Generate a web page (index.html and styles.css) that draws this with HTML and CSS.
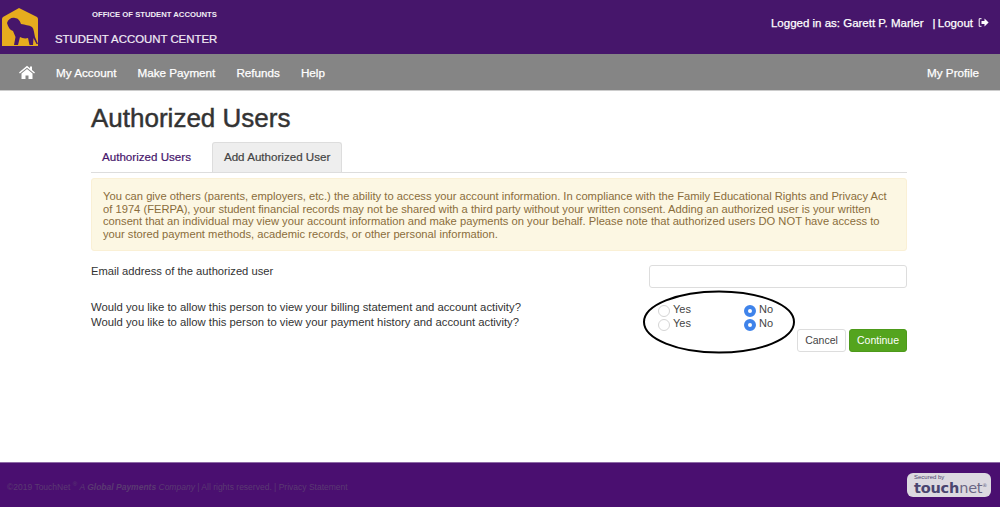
FILE: index.html
```html
<!DOCTYPE html>
<html lang="en">
<head>
<meta charset="utf-8">
<title>Authorized Users</title>
<link rel="stylesheet" href="styles.css">
</head>
<body>
<div class="page">
  <header class="top">
    <div class="brand">
      <svg class="logo" width="40" height="48" viewBox="0 0 40 48">
        <path fill="#e6ac1e" d="M2 46V19Q2 18 3 17L19 8 37 17Q38 18 38 19V46z"/>
        <path fill="#46166b" d="M7 23C8 19 12 17 15 18 18 18 20 21 21 24 25 25 29 25 32 27 34 29 34 33 35 37L38 44 36.500 44 33.500 38 33 45 29.500 45 28 38C25 39 22 38 20 37L18 45 14 45 15.500 37 13 31C10 30 8 27 7 23z"/>
      </svg>
      <div class="brand-text">
        <div class="office">OFFICE OF STUDENT ACCOUNTS</div>
        <div class="center">STUDENT ACCOUNT CENTER</div>
      </div>
    </div>
    <div class="user">
      <span>Logged in as: Garett P. Marler</span>
      <span class="logout">|&thinsp;Logout</span>
      <svg class="logout-icon" width="11" height="9" viewBox="0 0 11 9"><path fill="none" stroke="#fff" d="M3.5.7H1.2v7.6h2.3"/><path fill="#fff" d="M3.5 3h3V.6L10.6 4.5 6.5 8.4V6h-3z"/></svg>
    </div>
  </header>
  <nav class="menu">
    <div class="menu-left">
      <svg class="home" width="16" height="14" viewBox="0 0 16 14"><path fill="#fff" d="M8 .8 11 3.3V1.6h2v3.4l3 2.6-.9 1L8 2.700.9 8.600 0 7.600zM2.500 8.600 8 4l5.500 4.600V14H9.500v-3.500h-3V14h-4z"/></svg>
      <a>My Account</a>
      <a>Make Payment</a>
      <a>Refunds</a>
      <a>Help</a>
    </div>
    <a>My Profile</a>
  </nav>
  <main class="content">
    <h1>Authorized Users</h1>
    <div class="tabs">
      <a class="tab">Authorized Users</a>
      <a class="tab active">Add Authorized User</a>
    </div>
    <div class="alert">You can give others (parents, employers, etc.) the ability to access your account information. In compliance with the Family Educational Rights and Privacy Act of 1974 (FERPA), your student financial records may not be shared with a third party without your written consent. Adding an authorized user is your written consent that an individual may view your account information and make payments on your behalf. Please note that authorized users DO NOT have access to your stored payment methods, academic records, or other personal information.</div>
    <div class="form-row email-row">
      <label>Email address of the authorized user</label>
      <input class="email" type="text">
    </div>
    <div class="form-row radio-row">
      <div class="questions">
        <div>Would you like to allow this person to view your billing statement and account activity?</div>
        <div>Would you like to allow this person to view your payment history and account activity?</div>
      </div>
      <div class="answers">
        <div class="answer"><span class="opt"><i class="radio"></i>Yes</span><span class="opt"><i class="radio on"></i>No</span></div>
        <div class="answer"><span class="opt"><i class="radio"></i>Yes</span><span class="opt"><i class="radio on"></i>No</span></div>
        <svg class="circle" width="154" height="66" viewBox="0 0 154 66"><ellipse cx="77" cy="33" rx="75" ry="30.500" fill="none" stroke="#000" stroke-width="2"/></svg>
      </div>
    </div>
    <div class="buttons">
      <button class="btn cancel" type="button">Cancel</button>
      <button class="btn go" type="button">Continue</button>
    </div>
  </main>
  <footer class="foot">
    <div class="legal">©2019 TouchNet <sup>®</sup> <em>A <b>Global Payments</b> Company</em> | All rights reserved. | Privacy Statement</div>
    <div class="badge"><span class="sec">Secured by</span><span class="tn"><b>touch</b>net<sup>®</sup></span></div>
  </footer>
</div>
</body>
</html>
```
FILE: styles.css
```css
* { box-sizing: border-box; }
html, body { margin: 0; height: 100%; }
body { font-family: "Liberation Sans", Arial, sans-serif; color: #333; background: #fff; }
.page { height: 507px; display: flex; flex-direction: column; overflow: hidden; }
.top { height: 54px; background: #46166b; color: #fff; display: flex; justify-content: space-between; }
.brand { display: flex; }
.logo { flex: none; }
.brand-text { margin-left: 15px; color: #f1ecf5; }
.office { font-size: 7.700px; font-weight: bold; margin: 10px 0 0 37px; line-height: 10px; }
.center { font-size: 11.400px; line-height: 14px; margin-top: 12px; -webkit-text-stroke: .2px #f1ecf5; }
.user { font-size: 11.500px; -webkit-text-stroke: .25px #fff; display: flex; align-items: center; height: 45px; padding-right: 11px; }
.logout { margin-left: 9px; }
.logout-icon { margin-left: 5px; }
.menu { height: 37px; background: #858585; border-bottom: 1px solid #ccc; color: #fff; font-size: 11.700px; -webkit-text-stroke: .25px #fff; display: flex; justify-content: space-between; align-items: center; padding: 0 21px 0 19px; }
.menu-left { display: flex; align-items: center; gap: 21px; }
.content { flex: 1; padding: 0 93px 0 91px; }
h1 { margin: 0; font-size: 26px; font-weight: 500; line-height: 30px; padding-top: 12px; height: 51px; color: #333; -webkit-text-stroke: .45px #333; }
.tabs { display: flex; height: 31px; border-bottom: 1px solid #ddd; font-size: 11.600px; -webkit-text-stroke: .2px; }
.tab { padding: 0 11px; line-height: 30px; color: #46166b; margin-right: 10px; }
.tab.active { background: #eee; border: 1px solid #ddd; border-bottom: 0; border-radius: 3px 3px 0 0; color: #444; line-height: 28px; }
.alert { margin-top: 5px; height: 73px; padding: 11px 11px 0; background: #fcf7e3; border: 1px solid #faf0d5; border-radius: 3px; color: #8a6d3b; font-size: 11.200px; line-height: 12.500px; }
.form-row { display: flex; justify-content: space-between; font-size: 11.200px; color: #333; }
.email-row { margin-top: 14px; height: 24px; }
.email-row label { line-height: 13px; }
.email { width: 258px; height: 23px; border: 1px solid #ddd; border-radius: 3px; background: #fff; }
.radio-row { margin-top: 11px; line-height: 14.500px; }
.questions { font-size: 11.300px; }
.answers { position: relative; width: 258px; font-size: 11px; top: 2px; }
.answer { display: flex; height: 14px; }
.opt { width: 86px; display: flex; color: #444; padding-left: 9px; }
.radio { width: 12px; height: 12px; border: 1px solid #d5d5d5; border-radius: 50%; margin: 3px 3px 0 0; background: #fff; }
.radio.on { border: 4px solid #3f83ea; }
.circle { position: absolute; left: -7px; top: -13px; }
.buttons { display: flex; justify-content: flex-end; gap: 3px; margin-top: 0; }
.btn { height: 23px; font: 10.500px "Liberation Sans", Arial, sans-serif; border-radius: 3px; padding: 0 0 1px; }
.cancel { width: 49px; background: #fff; border: 1px solid #ddd; color: #444; }
.go { width: 58px; background: #54a41e; border: 1px solid #4d9a1a; color: #fff; }
.foot { height: 45px; background: #4a0f70; border-top: 1px solid #8e6aa6; display: flex; justify-content: space-between; padding: 0 9px 0 7px; }
.legal { font-size: 8.500px; color: #5a3a72; margin-top: 19px; }
.legal sup { font-size: 6px; line-height: 0; }
.badge { width: 84px; height: 24px; margin-top: 10px; background: #dcd9e0; border-radius: 6px; color: #4a4570; padding: 1px 0 0 7px; display: flex; flex-direction: column; }
.sec { font-size: 6px; line-height: 7px; }
.tn { font-size: 14.500px; line-height: 14px; font-family: "DejaVu Sans", sans-serif; letter-spacing: -.2px; color: #6a6684; }
.tn b { color: #4a4570; }
.tn sup { font-size: 5px; line-height: 0; }
```
